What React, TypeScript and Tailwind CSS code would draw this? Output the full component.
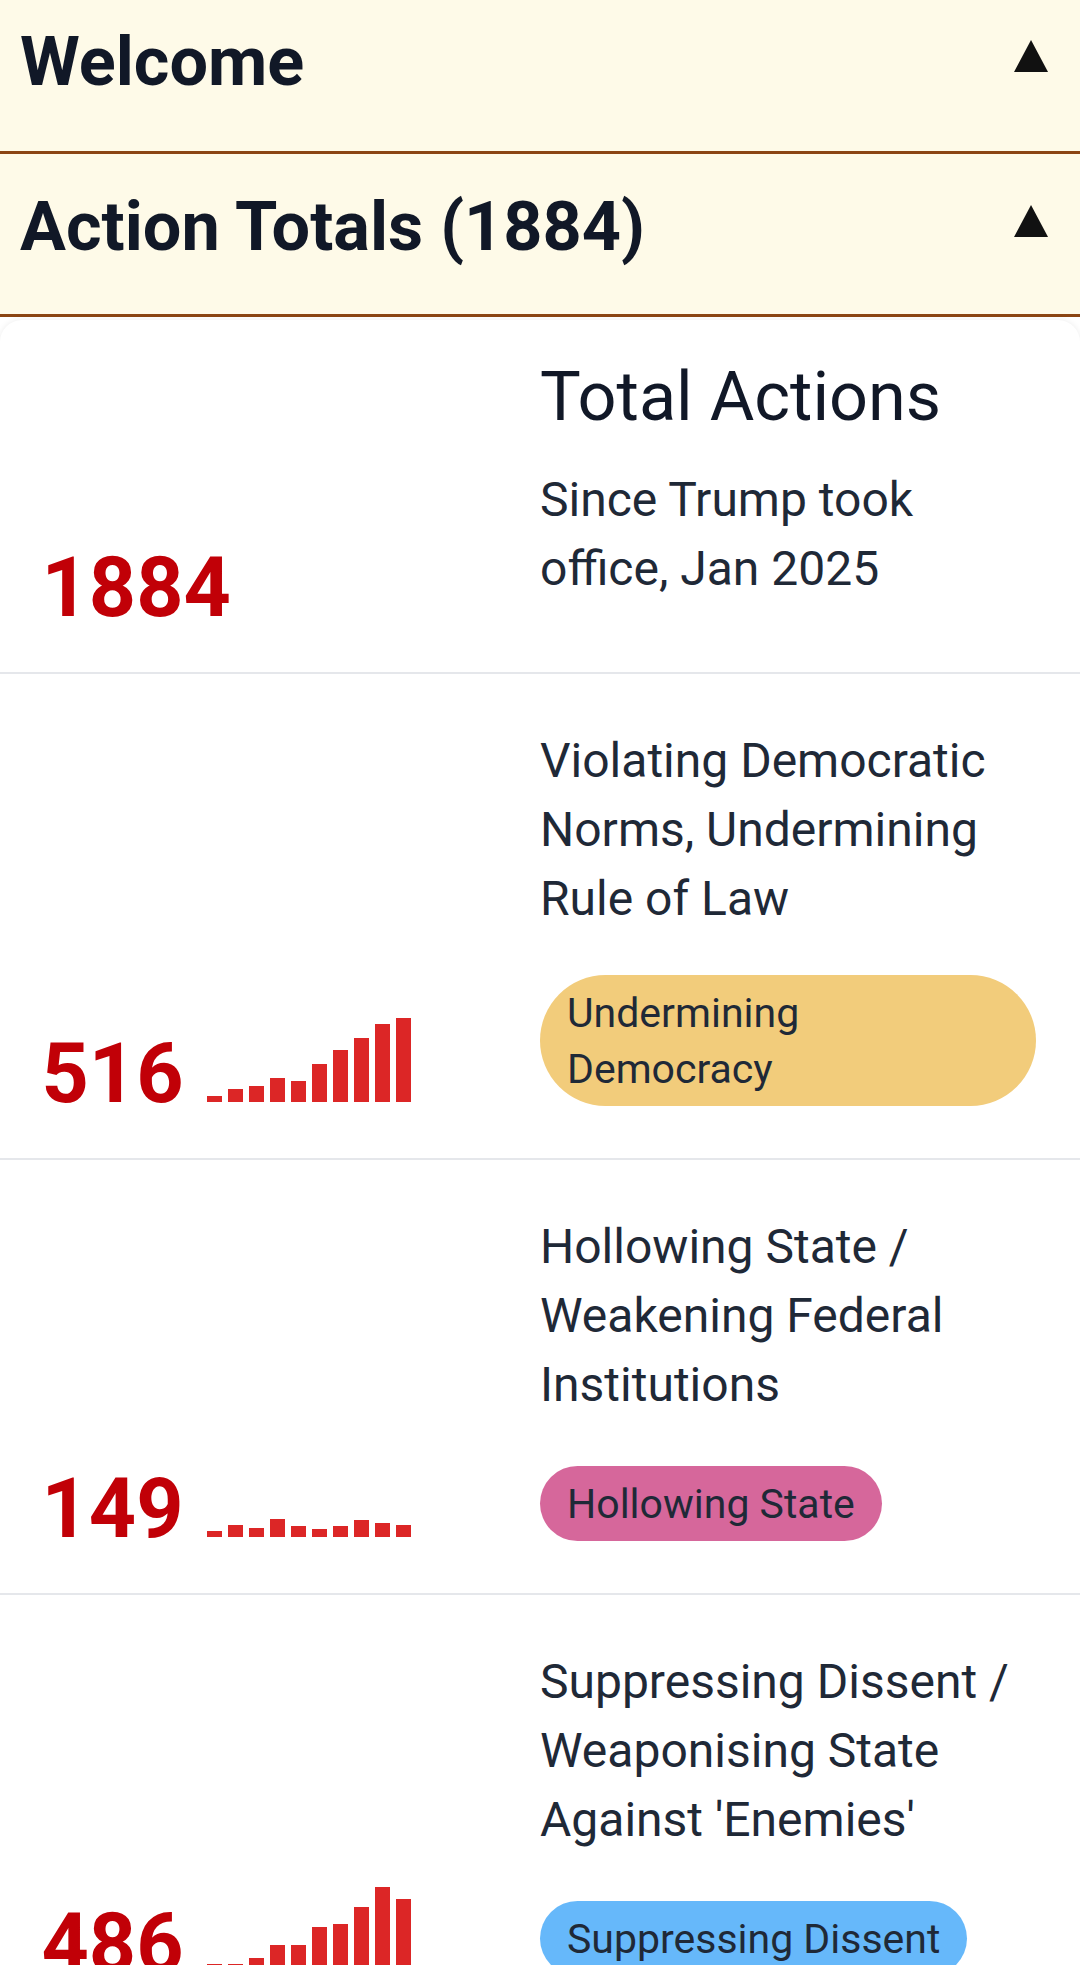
import React from 'react';

const FONT = { fontFamily: 'Roboto, "Noto Sans", "Liberation Sans", sans-serif' };

interface Category {
  total: number;
  title: string;
  tag: string;
  tagClass: string;
  gapClass: string;
  bars: number[];
}

const CATEGORIES: Category[] = [
  {
    total: 516,
    title: 'Violating Democratic Norms, Undermining Rule of Law',
    tag: 'Undermining Democracy',
    tagClass: 'bg-[#f2cc7b]',
    gapClass: 'mt-[42px]',
    bars: [6, 13, 16, 24, 21, 38, 52, 64, 78, 84],
  },
  {
    total: 149,
    title: 'Hollowing State / Weakening Federal Institutions',
    tag: 'Hollowing State',
    tagClass: 'bg-[#d6679b]',
    gapClass: 'mt-[47px]',
    bars: [6, 12, 9, 18, 11, 8, 11, 17, 14, 12],
  },
  {
    total: 486,
    title: "Suppressing Dissent / Weaponising State Against 'Enemies'",
    tag: 'Suppressing Dissent',
    tagClass: 'bg-[#66b8fa]',
    gapClass: 'mt-[47px]',
    bars: [8, 8, 14, 27, 27, 45, 48, 65, 85, 73],
  },
];

function Triangle() {
  return (
    <svg width="34" height="32" viewBox="0 0 34 32" className="block shrink-0">
      <path d="M17 0 L34 32 L0 32 Z" fill="#111111" />
    </svg>
  );
}

function SectionHeader({ title, first = false }: { title: string; first?: boolean }) {
  return (
    <div
      className={`flex items-start justify-between border-b-[3px] border-[#8b4513] bg-[#fefae8] pl-[20px] pr-[32px] ${
        first ? 'pt-[17px] pb-[43px]' : 'pt-[28px] pb-[41px]'
      }`}
    >
      <h2 className="text-[68.4px] font-bold leading-[91px] text-[#111827]">{title}</h2>
      <div className="mt-[23px]">
        <Triangle />
      </div>
    </div>
  );
}

function Bars({ values }: { values: number[] }) {
  return (
    <div className="flex items-end gap-[6px]">
      {values.map((h, i) => (
        <div key={i} className="w-[15px] bg-[#dc2626]" style={{ height: h }} />
      ))}
    </div>
  );
}

function Total({ value, bars }: { value: number; bars?: number[] }) {
  return (
    <div className="-ml-[2.5px] flex items-baseline gap-[23px] self-end">
      <span className="text-[82.5px] font-bold leading-[99px] text-[#c10007]">{value}</span>
      {bars ? <Bars values={bars} /> : null}
    </div>
  );
}

function CategoryRow({ cat }: { cat: Category }) {
  return (
    <div className="grid grid-cols-2 border-b-2 border-[#e5e7eb] px-[44px] pt-[52px] pb-[35px]">
      <Total value={cat.total} bars={cat.bars} />
      <div className="flex flex-col items-start pb-[17px]">
        <p className="text-[48px] leading-[69px] text-[#1f2937]">{cat.title}</p>
        <span
          className={`rounded-full px-[27px] py-[9.5px] text-[41px] leading-[56px] text-[#1f2937] ${cat.tagClass} ${cat.gapClass}`}
        >
          {cat.tag}
        </span>
      </div>
    </div>
  );
}

export default function App() {
  return (
    <div className="min-h-screen w-[1080px] overflow-hidden bg-white" style={FONT}>
      <SectionHeader title="Welcome" first />
      <SectionHeader title="Action Totals (1884)" />

      <div className="mt-[3px] rounded-t-[22px] bg-white shadow-[0_0_6px_rgba(0,0,0,0.08)]">
        <div className="grid grid-cols-2 border-b-2 border-[#e5e7eb] px-[44px] pt-[32px] pb-[35px]">
          <Total value={1884} />
          <div className="pb-[34px]">
            <h3 className="text-[68.4px] leading-[91px] text-[#111827]">Total Actions</h3>
            <p className="mt-[22px] text-[48px] leading-[69px] text-[#1f2937]">Since Trump took office, Jan 2025</p>
          </div>
        </div>

        {CATEGORIES.map((cat) => (
          <CategoryRow key={cat.tag} cat={cat} />
        ))}
      </div>
    </div>
  );
}
